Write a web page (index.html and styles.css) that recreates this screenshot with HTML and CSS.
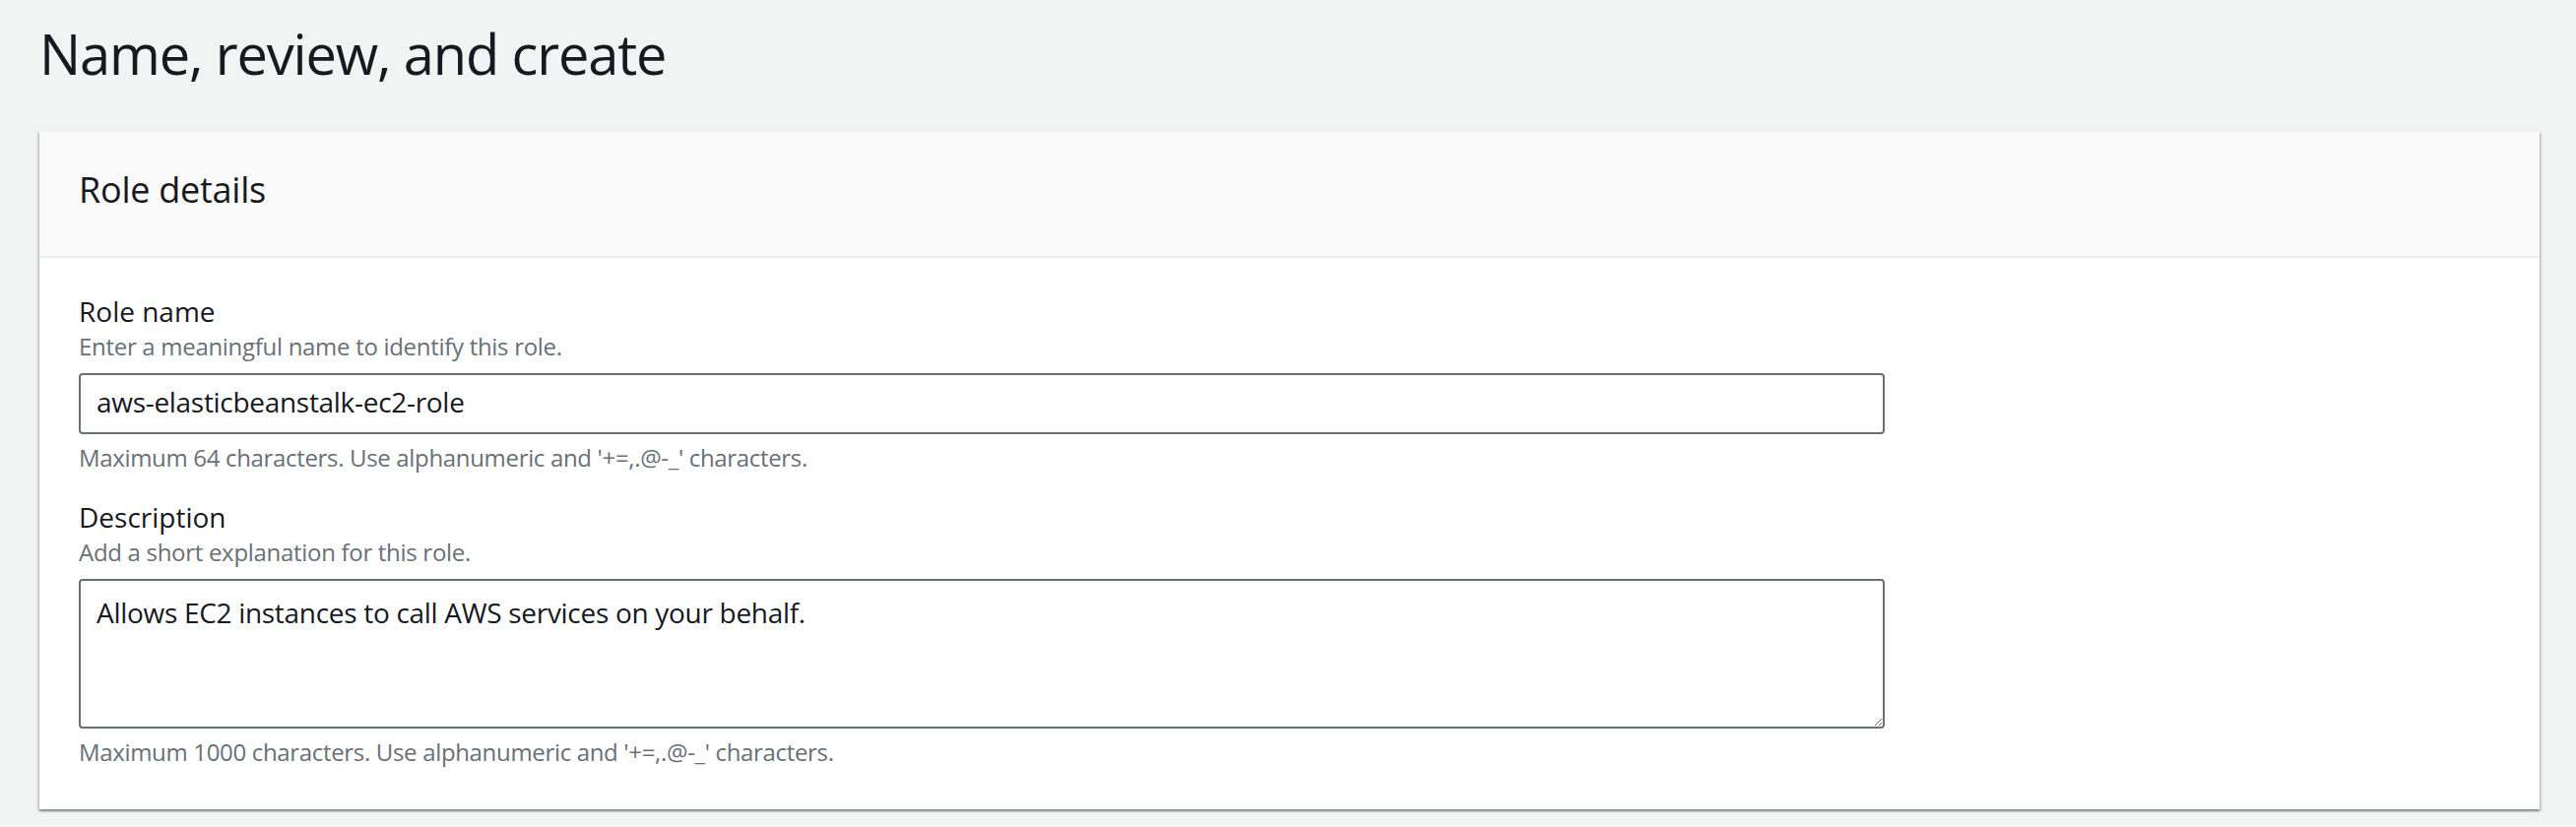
FILE: index.html
```html
<!DOCTYPE html>
<html lang="en">
<head>
<meta charset="utf-8">
<title>Name, review, and create</title>
<link rel="stylesheet" href="styles.css">
</head>
<body>
<main class="page">
  <h1 class="page-title">Name, review, and create</h1>
  <section class="card">
    <header class="card-header">
      <h2 class="card-title">Role details</h2>
    </header>
    <div class="card-body">
      <div class="field">
        <label class="field-label" for="role-name">Role name</label>
        <div class="field-desc">Enter a meaningful name to identify this role.</div>
        <div class="field-control">
          <input id="role-name" class="text-input" type="text" value="aws-elasticbeanstalk-ec2-role">
        </div>
        <div class="field-hint">Maximum 64 characters. Use alphanumeric and '+=,.@-_' characters.</div>
      </div>
      <div class="field field-next">
        <label class="field-label" for="role-desc">Description</label>
        <div class="field-desc">Add a short explanation for this role.</div>
        <div class="field-control">
          <textarea id="role-desc" class="text-area">Allows EC2 instances to call AWS services on your behalf.</textarea>
        </div>
        <div class="field-hint">Maximum 1000 characters. Use alphanumeric and '+=,.@-_' characters.</div>
      </div>
    </div>
  </section>
</main>
</body>
</html>
```

FILE: styles.css
```css
* {
  box-sizing: border-box;
}

html, body {
  margin: 0;
  padding: 0;
}

body {
  background: #f2f3f3;
  color: #16191f;
  font-family: "Open Sans", "Noto Sans", sans-serif;
  width: 2616px;
  height: 840px;
  overflow: hidden;
}

.page {
  padding: 22px 37px 0 40px;
}

.page-title {
  margin: 0 0 47px 0;
  font-size: 56px;
  line-height: 64px;
  font-weight: 400;
  letter-spacing: -1.15px;
  color: #16191f;
}

.card {
  background: #ffffff;
  border-top: 1px solid #eaeded;
  box-shadow: 0 2px 2px 0 rgba(0, 28, 36, 0.3),
              2px 2px 2px 0 rgba(0, 28, 36, 0.15),
              -2px 2px 2px 0 rgba(0, 28, 36, 0.15);
}

.card-header {
  background: #fafafa;
  border-bottom: 2px solid #eaeded;
  padding: 35px 40px 43px 40px;
}

.card-title {
  margin: 0;
  font-size: 36px;
  line-height: 48px;
  font-weight: 400;
  letter-spacing: -0.25px;
}

.card-body {
  padding: 37px 40px 44px 40px;
}

.field-label {
  display: block;
  font-size: 28px;
  line-height: 34px;
  margin-bottom: 5px;
  color: #16191f;
}

.field-desc {
  font-size: 24px;
  line-height: 28px;
  letter-spacing: -0.3px;
  color: #687078;
}

.field-control {
  margin-top: 13px;
  width: 1834px;
}

.field-next {
  margin-top: 29px;
}

.text-input,
.text-area {
  display: block;
  width: 100%;
  font-family: inherit;
  font-size: 28px;
  letter-spacing: -0.3px;
  color: #16191f;
  background: #ffffff;
  border: 2px solid #687078;
  border-radius: 4px;
  outline: none;
}

.text-input {
  height: 62px;
  padding: 0 16px 4px 16px;
  line-height: 40px;
}

.text-area {
  height: 152px;
  padding: 12px 16px;
  line-height: 40px;
  resize: vertical;
}

.field-hint {
  margin-top: 10px;
  font-size: 24px;
  line-height: 28px;
  letter-spacing: -0.33px;
  color: #687078;
}

.field-next .field-hint {
  margin-top: 10px;
}
```
